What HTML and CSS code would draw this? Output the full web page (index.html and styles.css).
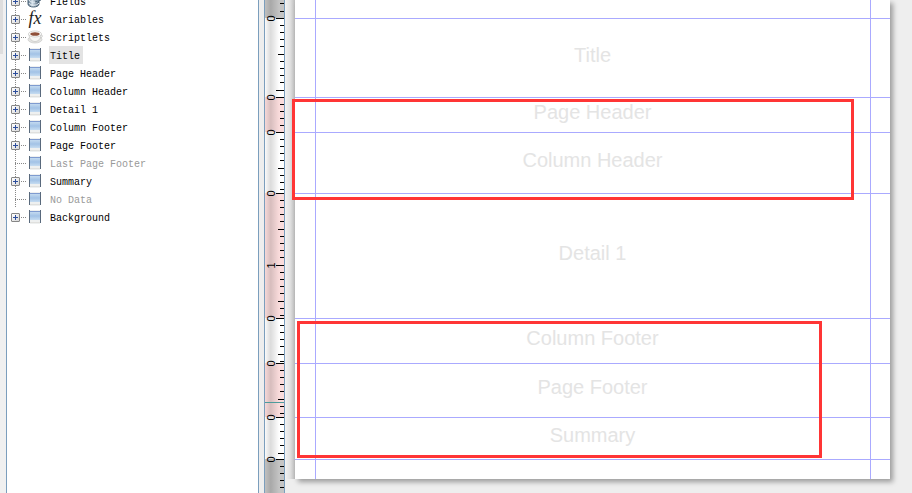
FILE: index.html
```html
<!DOCTYPE html>
<html lang="en">
<head>
<meta charset="utf-8">
<title>Report Designer</title>
<link rel="stylesheet" href="styles.css">
</head>
<body>
<svg class="defs" aria-hidden="true">
  <defs>
    <linearGradient id="blue" x1="0" y1="0" x2="0" y2="1"><stop offset="0" stop-color="#c3daf0"/><stop offset=".5" stop-color="#a2c2e6"/><stop offset="1" stop-color="#c6dcf1"/></linearGradient>
    <linearGradient id="metal" x1="0" y1="0" x2="1" y2="0"><stop offset="0" stop-color="#5c7388"/><stop offset=".4" stop-color="#d5e2ec"/><stop offset="1" stop-color="#41586e"/></linearGradient>
    <symbol id="band" viewBox="0 0 16 16"><path fill="#eef0f0" d="M3 1h10v14H3z"/><path fill="url(#blue)" d="M3 3h10v8H3z"/><path fill="#7f9bd0" d="M3 2h10v1H3z"/><path fill="#e0e0de" d="M3 13h10v1H3z"/><path fill="#59697c" d="M2 1h1v13H2zM13 1h1v13h-1z"/></symbol>
    <symbol id="fields" viewBox="0 0 16 16"><path fill="url(#metal)" stroke="#4c6478" d="M1 2v9c0 4 11 4 11 0V2z"/><path fill="none" stroke="#e6eef4" d="M2 7c1 3 8 3 10 0M2 10c1 3 8 3 10 0"/><path fill="#8ba2b5" stroke="#4c6478" d="M8 9l6-2V2"/></symbol>
    <symbol id="cup" viewBox="0 0 16 16"><ellipse cx="8" cy="10.5" rx="7" ry="3.5" fill="#e4e4e2" stroke="#c4c4c2" stroke-width=".6"/><path fill="#f7f7f5" stroke="#c4c4c2" stroke-width=".7" d="M2 5c0 10 12 10 12 0z"/><path fill="none" stroke="#c8c8c6" d="M13 6c3-1 3 3 0 3"/><ellipse cx="8" cy="5" rx="6.5" ry="3" fill="#fff" stroke="#c4c4c2" stroke-width=".7"/><ellipse cx="8" cy="5" rx="4.7" ry="1.8" fill="#8f5039"/></symbol>
  </defs>
</svg>
<main class="app">
  <div class="gutter"><div class="grip"></div></div>
  <nav class="inspector" aria-label="Report inspector">
    <ul class="tree" id="tree"></ul>
  </nav>
  <div class="splitter"></div>
  <div class="ruler" id="ruler"></div>
  <section class="canvas">
    <div class="page">
      <div class="band h-margin"></div>
      <div class="band h-title">Title</div>
      <div class="band h-page-header">Page Header</div>
      <div class="band h-column-header">Column Header</div>
      <div class="band h-detail">Detail 1</div>
      <div class="band h-column-footer">Column Footer</div>
      <div class="band h-page-footer">Page Footer</div>
      <div class="band h-summary">Summary</div>
      <div class="band h-bottom"></div>
      <div class="columns"></div>
      <div class="mark mark-header"></div>
      <div class="mark mark-footer"></div>
    </div>
  </section>
</main>
<script src="script.js"></script>
</body>
</html>
```
FILE: styles.css
```css
* { box-sizing: border-box; }
body { margin: 0; background: #eee; overflow: hidden; }
.defs { position: absolute; width: 0; height: 0; }
.app { display: flex; height: 100vh; overflow: hidden; }

.gutter { flex: none; width: 6px; background: #f0f0f0; }
.grip { width: 3px; height: 54px; background: #dedede; }
.inspector { flex: none; width: 253px; background: #fff; border: solid #7b9ebd; border-width: 0 1px; overflow: hidden; }
.tree { list-style: none; margin: -8px 0 0; padding: 0 0 0 4px; }
.node { display: flex; align-items: center; height: 18px; background: linear-gradient(#888 50%, transparent 0) 4px 0 / 1px 2px repeat-y; }
.node:last-child { background: none; }
.toggle { flex: none; width: 9px; height: 9px; padding: 0; border: 1px solid #868686; border-radius: 1px; background: linear-gradient(#2c4d9c, #2c4d9c) center / 5px 1px no-repeat, linear-gradient(#2c4d9c, #2c4d9c) center / 1px 5px no-repeat, linear-gradient(135deg, #fff, #d8d8d8); }
.leaf { flex: none; width: 5px; height: 1px; margin-left: 4px; background: repeating-linear-gradient(90deg, #888 0 1px, transparent 1px 2px); }
.stem { flex: none; width: 6px; height: 1px; margin-left: 1px; background: repeating-linear-gradient(90deg, #888 0 1px, transparent 1px 2px); }
.icon { flex: none; width: 16px; height: 16px; margin: 0 6px 0 0; }
.fx { font: italic 18px/14px "Liberation Serif", serif; color: #222; text-align: center; }
.name { padding: 3px 3px 0 1px; font: 10px/15px "Liberation Mono", monospace; color: #000; white-space: pre; }
.node.selected .name { background: #e3e3e3; }
.node.muted .name { color: #999; }

.splitter { flex: none; width: 6px; background: #eee; border-right: 1px solid #7b9ebd; }
.ruler { flex: none; width: 20px; border-right: 1px solid #7b9ebd; }
.ruler svg { display: block; }
.ruler text { font: 11px "Liberation Sans", sans-serif; text-anchor: middle; }

.canvas { flex: 1; padding: 0 22px 0 10px; background: linear-gradient(90deg, #f3f3f3, #e2e2e2 5px, #bcbcbc 10px, #eee 10px) no-repeat 0 0 / 100% 479px, #eee; }
.page { position: relative; background: #fff; box-shadow: 3px 3px 5px rgba(0, 0, 0, .35); }
.band { display: flex; align-items: center; justify-content: center; padding-bottom: 7px; border-bottom: 1px solid #aaf; font: 20px/24px "Liberation Sans", sans-serif; color: #e4e4e4; }
.h-margin { height: 19px; }
.h-title { height: 79px; }
.h-page-header { height: 35px; }
.h-column-header { height: 61px; }
.h-detail { height: 125px; }
.h-column-footer { height: 45px; }
.h-page-footer { height: 54px; }
.h-summary { height: 42px; }
.h-bottom { height: 19px; border: 0; }
.columns { position: absolute; inset: 0 19px 0 20px; border: solid #aaf; border-width: 0 1px; }
.mark { position: absolute; border: 3px solid #ff3535; }
.mark-header { inset: 99px 36px auto -3px; height: 101px; }
.mark-footer { inset: 321px 68px auto 2px; height: 137px; }
```
FILE: script.js
```js
const nodes = [
  ["Fields", "fields"], ["Variables", "fx"], ["Scriptlets", "cup"],
  ["Title", "band", "selected"], ["Page Header", "band"], ["Column Header", "band"],
  ["Detail 1", "band"], ["Column Footer", "band"], ["Page Footer", "band"],
  ["Last Page Footer", "band", "muted leafy"], ["Summary", "band"],
  ["No Data", "band", "muted leafy"], ["Background", "band"]
];
document.getElementById("tree").innerHTML = nodes.map(([name, icon, state = ""]) => {
  const handle = state.includes("leafy")
    ? '<span class="leaf"></span>'
    : `<button class="toggle" type="button" aria-label="Expand ${name}"></button>`;
  const picture = icon === "fx"
    ? '<span class="icon fx">fx</span>'
    : `<svg class="icon" aria-hidden="true"><use href="#${icon}"/></svg>`;
  return `<li class="node ${state}">${handle}<span class="stem"></span>${picture}<span class="name">${name}</span></li>`;
}).join("");

// Each band restarts the scale: ten ticks to the inch, 72 units to the inch.
const starts = [18, 97, 132, 193, 318, 363, 417, 459];
const rulerEnd = 1200;
let shapes = '<path fill="#c4c4c4" d="M0 0h19v18H0z"/>';
let ticks = '<path d="M15 3h4v1h-4zM15 11h4v1h-4z"/>';
starts.forEach((y, i) => {
  const end = starts[i + 1] || rulerEnd;
  const fill = end === rulerEnd ? "#c4c4c4" : i % 2 ? "#fadcdc" : "#fff";
  shapes += `<rect y="${y}" width="19" height="${end - y}" fill="${fill}"/>`;
  for (let n = 0; y + n * 7.2 < end; n++) {
    const at = Math.floor(y + n * 7.2);
    const inBand = end !== rulerEnd && end - at > 10;
    const long = n % 10 === 0 ? 8 : n % 5 === 0 ? 6 : 4;
    ticks += `<rect x="${19 - long}" y="${at}" width="${long}" height="1"/>`;
    if (n === 0 || (n % 10 === 0 && inBand)) {
      ticks += `<text transform="translate(10 ${at + 0.5}) rotate(-90)">${n / 10}</text>`;
    }
  }
});
document.getElementById("ruler").innerHTML =
  `<svg width="19" height="${rulerEnd}" role="img" aria-label="Vertical ruler">
  <linearGradient id="shade"><stop offset="0" stop-color="#000" stop-opacity=".02"/><stop offset=".3" stop-color="#000" stop-opacity=".14"/><stop offset=".75" stop-color="#000" stop-opacity="0"/></linearGradient>
  ${shapes}<rect width="19" height="${rulerEnd}" fill="url(#shade)"/><path fill="#4c9c9c" d="M0 402h19v1H0z"/>${ticks}</svg>`;
```
